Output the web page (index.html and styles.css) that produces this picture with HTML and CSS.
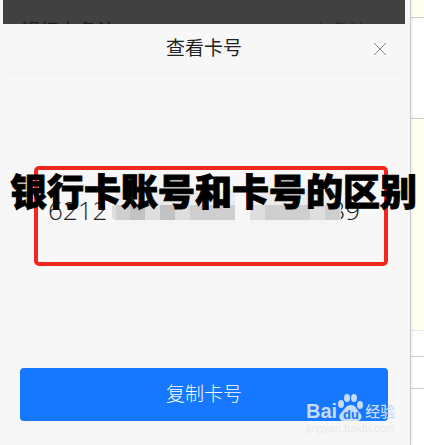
FILE: index.html
```
<!DOCTYPE html>
<html lang="zh-CN">
<head>
  <meta charset="UTF-8">
  <title>银行卡账号和卡号的区别</title>
  <link rel="stylesheet" href="styles.css">
</head>
<body>
  <div class="page">
    <main class="phone">
      <div class="backdrop">
        <span>银行卡备注</span>
        <span class="note">未备注 &gt;</span>
      </div>

      <section class="sheet">
        <header class="sheet-header">
          <h2>查看卡号</h2>
          <button class="close" type="button" aria-label="关闭">
            <svg viewBox="0 0 14 14"><path d="M1 1l12 12M13 1L1 13"/></svg>
          </button>
        </header>

        <div class="card-box">
          <h1>银行卡账号和卡号的区别</h1>
          <div class="number">
            <span>6212</span>
            <svg class="mosaic" viewBox="0 0 231 44">
              <path fill="#ececec" d="M5 2h119v16H5zM139 2h80v16h-80z"/>
              <path fill="#f4f4f4" d="M5 32h119v5H5zM139 32h80v5h-80z"/>
              <path fill="#dedede" d="M1 17h123v15H3l-2-2zM139 17h91v15h-91z"/>
              <path fill="#cfcfcf" d="M5 17h14v15H5zM79 17h45v15H79zM154 17h45v15h-45zM214 17h15v13l-2 2h-13z"/>
              <path fill="#c2c2c2" d="M19 17h15v15H19zM49 17h15v15H49z"/>
            </svg>
            <span class="last">39</span>
          </div>
        </div>

        <div class="actions">
          <button class="copy" type="button">复制卡号</button>
          <div class="watermark">
            <div class="brand">
              <span>Bai</span>
              <svg class="paw" viewBox="0 0 26 28">
                <ellipse cx="3" cy="11" rx="3" ry="4"/>
                <ellipse cx="9" cy="5" rx="3" ry="4"/>
                <ellipse cx="16" cy="5" rx="3" ry="4"/>
                <ellipse cx="22" cy="12" rx="3" ry="4"/>
                <path d="M13 12c5 0 6 5 9 8 3 4 1 8-3 8H6c-5 0-6-5-3-8 4-4 5-8 10-8z"/>
                <text x="13" y="26" text-anchor="middle">du</text>
              </svg>
              <span class="brand-cn">经验</span>
            </div>
            <div class="site">jingyan.baidu.com</div>
          </div>
        </div>
      </section>
    </main>

    <aside class="side">
      <div class="cell tint cell-top"></div>
      <div class="cell cell-white"></div>
      <div class="cell tint cell-tall"></div>
      <div class="cell cell-gap"></div>
      <div class="cell cell-row"></div>
    </aside>
  </div>
</body>
</html>
```
FILE: styles.css
```
* {
  box-sizing: border-box;
}
body {
  margin: 0;
  background: #fff;
  font-family: "Noto Sans CJK SC", sans-serif;
  color: #222;
}
h1, h2 {
  margin: 0;
}
.page {
  display: flex;
  min-height: 100vh;
  overflow: hidden;
}
.phone {
  flex: 1;
  min-width: 0;
  display: flex;
  flex-direction: column;
  padding-left: 3px;
  background: #f7f7f7;
  border-right: 1px solid #c8c8c8;
  box-shadow: 0 0 4px rgba(0, 0, 0, 0.12);
  z-index: 1;
}

/* dimmed page behind the sheet */
.backdrop {
  display: flex;
  justify-content: space-between;
  height: 24px;
  margin-right: 5px;
  padding: 16px 22px 0 18px;
  overflow: hidden;
  background: #414141;
  color: #1c1c1c;
  font-size: 19px;
  line-height: 28px;
}
.note {
  color: #2c2c2c;
}

.sheet {
  flex: 1;
  display: flex;
  flex-direction: column;
}
.sheet-header {
  display: grid;
  grid-template-columns: 1fr auto 1fr;
  align-items: center;
  height: 50px;
  margin-right: 5px;
  padding: 0 18px;
  border-bottom: 1px solid #efefef;
}
.sheet-header h2 {
  grid-column: 2;
  padding-bottom: 4px;
  font-size: 19px;
  font-weight: 400;
  line-height: 28px;
}
.close {
  justify-self: end;
  display: flex;
  padding: 0;
  border: 0;
  background: none;
}
.close svg {
  width: 14px;
  height: 14px;
  fill: none;
  stroke: #888;
}

.card-box {
  height: 100px;
  margin: 92px 22px 0 31px;
  border: 4px solid #f2271f;
  border-radius: 5px;
}
.card-box h1 {
  position: relative;
  z-index: 2;
  margin: 0 -40px 0 -28px;
  color: #000;
  font-size: 37px;
  font-weight: 900;
  line-height: 40px;
  white-space: nowrap;
  -webkit-text-stroke: 1px #000;
}
.number {
  display: flex;
  align-items: center;
  height: 30px;
  margin-top: -15px;
  padding-left: 10px;
  font-family: "Open Sans", sans-serif;
  font-size: 26px;
  font-weight: 300;
  line-height: 30px;
}
.mosaic {
  position: relative;
  z-index: 1;
  flex: none;
  width: 231px;
  height: 44px;
  margin-left: 4px;
}
.last {
  margin-left: -12px;
}

.actions {
  position: relative;
  margin: 102px 22px 0 17px;
}
.copy {
  display: block;
  width: 100%;
  height: 53px;
  padding: 0 0 4px;
  border: 0;
  border-radius: 4px;
  background: #1677ff;
  color: #fff;
  font-family: inherit;
  font-size: 19px;
  font-weight: 300;
}

/* site watermark over the button */
.watermark {
  position: absolute;
  right: -8px;
  bottom: -14px;
  width: 90px;
  white-space: nowrap;
}
.brand {
  display: flex;
  align-items: flex-end;
  gap: 1px;
  color: #c5ddfb;
  font-family: "Liberation Sans", sans-serif;
  font-size: 20px;
  font-weight: 700;
  line-height: 20px;
}
.brand-cn {
  font-family: "Noto Sans CJK SC", sans-serif;
  font-size: 15px;
  font-weight: 500;
}
.paw {
  flex: none;
  width: 26px;
  height: 28px;
  fill: #c5ddfb;
}
.paw text {
  fill: #1677ff;
  font-size: 13px;
}
.site {
  color: #e8e8e8;
  font-family: "Liberation Sans", sans-serif;
  font-size: 11px;
  line-height: 14px;
}

/* table edge to the right of the phone */
.side {
  flex: none;
  width: 13px;
}
.cell {
  border-bottom: 1px solid #d0d0d0;
}
.tint {
  background: #fffff0;
}
.cell-top {
  height: 18px;
}
.cell-white {
  height: 101px;
}
.cell-tall {
  height: 212px;
  border-color: #e8e8e0;
}
.cell-gap {
  height: 26px;
}
.cell-row {
  height: 32px;
}
```
